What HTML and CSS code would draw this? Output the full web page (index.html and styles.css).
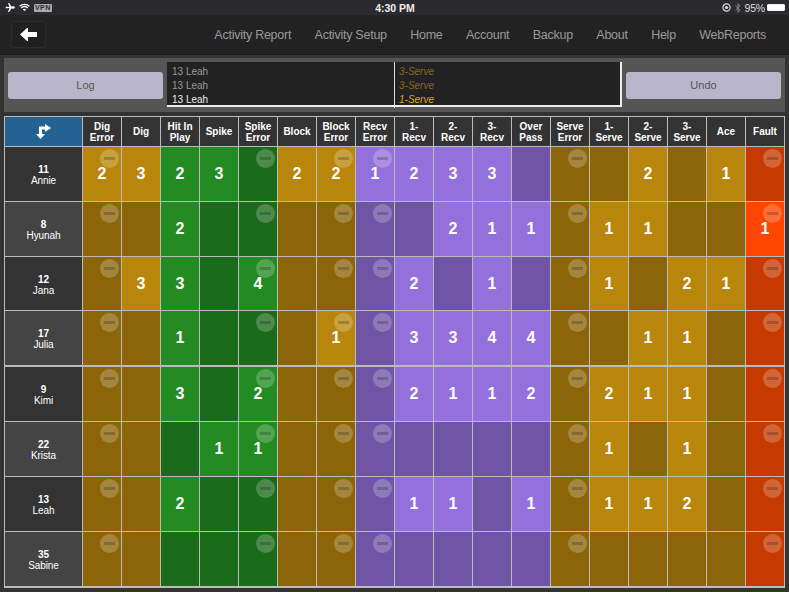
FILE: index.html
```html
<!DOCTYPE html>
<html lang="en">
<head>
<meta charset="utf-8">
<title>Activity</title>
<link rel="stylesheet" href="styles.css">
</head>
<body>
<div class="status">
  <div class="status-left">
    <svg class="ic-plane" width="10" height="11" viewBox="0 0 11 11"><path fill="#fff" d="M0.5 5.5l1.2-1 1.6.4 1.6-.1L3.3.6h1.2l2.6 3.7 2.3-.1c1 0 1.4.7 1.4 1.3s-.4 1.3-1.4 1.3l-2.3-.1-2.6 3.7H3.3l1.6-4.2-1.6-.1-1.6.4z"/></svg>
    <svg class="ic-wifi" width="11" height="9" viewBox="0 0 11 9"><path fill="none" stroke="#fff" stroke-width="1.3" d="M.6 3.2c2.8-2.5 7-2.5 9.8 0M2.2 4.9c1.9-1.6 4.7-1.6 6.6 0"/><path fill="#fff" d="M3.8 6.3c1-.8 2.4-.8 3.4 0L5.5 8.3z"/></svg>
    <span class="vpn">VPN</span>
  </div>
  <div class="time">4:30 PM</div>
  <div class="status-right">
    <svg width="9" height="9" viewBox="0 0 9 9"><circle cx="4.5" cy="4.5" r="3.6" fill="none" stroke="#ddd" stroke-width="1.2"/><circle cx="4.5" cy="4.5" r="1.6" fill="#ddd"/></svg>
    <svg class="ic-bt" width="6" height="10" viewBox="0 0 6 10"><path fill="none" stroke="#888" stroke-width="1" d="M.5 2.7l4.6 4.4L3 9.3V.7l2.1 2.2L.5 7.3"/></svg>
    <span class="pct">95%</span>
    <span class="battery"><span class="battery-fill"></span></span>
  </div>
</div>
<nav class="nav">
  <button class="back" type="button" aria-label="Back">
    <svg width="17" height="13" viewBox="0 0 17 13"><path fill="#fff" d="M0 6.5L7 0h1v4h9v5H8v4H7z"/></svg>
  </button>
  <div class="links">
    <a>Activity Report</a><a>Activity Setup</a><a>Home</a><a>Account</a><a>Backup</a><a>About</a><a>Help</a><a>WebReports</a>
  </div>
</nav>
<section class="panel">
  <button class="pbtn" type="button">Log</button>
  <div class="log">
    <div class="log-col names"><div>13 Leah</div><div>13 Leah</div><div class="cur">13 Leah</div></div>
    <div class="log-col acts"><div>3-Serve</div><div>3-Serve</div><div class="cur">1-Serve</div></div>
  </div>
  <button class="pbtn" type="button">Undo</button>
</section>
<div class="board">
  <div class="swap"><svg width="15" height="15" viewBox="0 0 15 15"><path fill="#fff" d="M9 0l6 4-6 4V5.5H6V10h3l-4.5 5L0 10h3V2.5h6z"/></svg></div>
  <div class="h">Dig Error</div><div class="h">Dig</div><div class="h">Hit In Play</div><div class="h">Spike</div><div class="h">Spike Error</div><div class="h">Block</div><div class="h">Block Error</div><div class="h">Recv Error</div><div class="h">1-<br>Recv</div><div class="h">2-<br>Recv</div><div class="h">3-<br>Recv</div><div class="h">Over Pass</div><div class="h">Serve Error</div><div class="h">1-<br>Serve</div><div class="h">2-<br>Serve</div><div class="h">3-<br>Serve</div><div class="h">Ace</div><div class="h">Fault</div>

  <div class="p"><b>11</b>Annie</div>
  <div class="c a on m">2</div><div class="c a on">3</div><div class="c g on">2</div><div class="c g on">3</div><div class="c g m"></div><div class="c a on">2</div><div class="c a on m">2</div><div class="c v on m">1</div><div class="c v on">2</div><div class="c v on">3</div><div class="c v on">3</div><div class="c v"></div><div class="c a m"></div><div class="c a"></div><div class="c a on">2</div><div class="c a"></div><div class="c a on">1</div><div class="c f m"></div>

  <div class="p alt"><b>8</b>Hyunah</div>
  <div class="c a m"></div><div class="c a"></div><div class="c g on">2</div><div class="c g"></div><div class="c g m"></div><div class="c a"></div><div class="c a m"></div><div class="c v m"></div><div class="c v"></div><div class="c v on">2</div><div class="c v on">1</div><div class="c v on">1</div><div class="c a m"></div><div class="c a on">1</div><div class="c a on">1</div><div class="c a"></div><div class="c a"></div><div class="c f on m">1</div>

  <div class="p"><b>12</b>Jana</div>
  <div class="c a m"></div><div class="c a on">3</div><div class="c g on">3</div><div class="c g"></div><div class="c g on m">4</div><div class="c a"></div><div class="c a m"></div><div class="c v m"></div><div class="c v on">2</div><div class="c v"></div><div class="c v on">1</div><div class="c v"></div><div class="c a m"></div><div class="c a on">1</div><div class="c a"></div><div class="c a on">2</div><div class="c a on">1</div><div class="c f m"></div>

  <div class="p alt"><b>17</b>Julia</div>
  <div class="c a m"></div><div class="c a"></div><div class="c g on">1</div><div class="c g"></div><div class="c g m"></div><div class="c a"></div><div class="c a on m">1</div><div class="c v m"></div><div class="c v on">3</div><div class="c v on">3</div><div class="c v on">4</div><div class="c v on">4</div><div class="c a m"></div><div class="c a"></div><div class="c a on">1</div><div class="c a on">1</div><div class="c a"></div><div class="c f m"></div>

  <div class="p top"><b>9</b>Kimi</div>
  <div class="c a m top"></div><div class="c a top"></div><div class="c g on top">3</div><div class="c g top"></div><div class="c g on m top">2</div><div class="c a top"></div><div class="c a m top"></div><div class="c v m top"></div><div class="c v on top">2</div><div class="c v on top">1</div><div class="c v on top">1</div><div class="c v on top">2</div><div class="c a m top"></div><div class="c a on top">2</div><div class="c a on top">1</div><div class="c a on top">1</div><div class="c a top"></div><div class="c f m top"></div>

  <div class="p alt"><b>22</b>Krista</div>
  <div class="c a m"></div><div class="c a"></div><div class="c g"></div><div class="c g on">1</div><div class="c g on m">1</div><div class="c a"></div><div class="c a m"></div><div class="c v m"></div><div class="c v"></div><div class="c v"></div><div class="c v"></div><div class="c v"></div><div class="c a m"></div><div class="c a on">1</div><div class="c a"></div><div class="c a on">1</div><div class="c a"></div><div class="c f m"></div>

  <div class="p"><b>13</b>Leah</div>
  <div class="c a m"></div><div class="c a"></div><div class="c g on">2</div><div class="c g"></div><div class="c g m"></div><div class="c a"></div><div class="c a m"></div><div class="c v m"></div><div class="c v on">1</div><div class="c v on">1</div><div class="c v"></div><div class="c v on">1</div><div class="c a m"></div><div class="c a on">1</div><div class="c a on">1</div><div class="c a on">2</div><div class="c a"></div><div class="c f m"></div>

  <div class="p alt"><b>35</b>Sabine</div>
  <div class="c a m"></div><div class="c a"></div><div class="c g"></div><div class="c g"></div><div class="c g m"></div><div class="c a"></div><div class="c a m"></div><div class="c v m"></div><div class="c v"></div><div class="c v"></div><div class="c v"></div><div class="c v"></div><div class="c a m"></div><div class="c a"></div><div class="c a"></div><div class="c a"></div><div class="c a"></div><div class="c f m"></div>
</div>
</body>
</html>
```
FILE: styles.css
```css
* { box-sizing: border-box; }
html, body { margin: 0; padding: 0; }
body {
  width: 789px;
  height: 592px;
  overflow: hidden;
  background: #333;
  font-family: "Liberation Sans", Arial, sans-serif;
  color: #fff;
}
.status {
  height: 15px;
  background: #2b2b2f;
  display: grid;
  grid-template-columns: 1fr auto 1fr;
  align-items: center;
  padding: 0 4px 0 5px;
}
.status-left { display: flex; align-items: center; gap: 4px; }
.vpn {
  font-size: 7px;
  line-height: 8px;
  height: 8px;
  padding: 0 1px;
  background: #aaa;
  color: #2b2b2f;
  font-weight: bold;
  letter-spacing: .4px;
  border-radius: 1px;
}
.time { font-size: 10.5px; font-weight: bold; color: #eee; }
.status-right { display: flex; align-items: center; justify-content: flex-end; gap: 4px; }
.pct { font-size: 10.5px; color: #ddd; letter-spacing: -.2px; }
.battery {
  display: block;
  width: 18px;
  height: 7px;
  border: 1px solid #eee;
  border-radius: 1px;
  margin-left: -2px;
}
.battery-fill { display: block; height: 100%; background: #fff; }
.nav {
  height: 40px;
  background: #222;
  border-bottom: 1px solid #1b1b1b;
  display: flex;
  align-items: center;
  padding: 0 23px 0 11px;
}
.back {
  width: 35px;
  height: 27px;
  padding: 0;
  background: #202020;
  border: 1px solid #2c2c2c;
  border-radius: 3px;
  display: flex;
  align-items: center;
  justify-content: center;
}
.links {
  margin-left: auto;
  display: flex;
  gap: 23.4px;
  font-size: 12.5px;
  color: #9a9a9a;
  letter-spacing: -.25px;
}
.panel {
  margin: 3px 4px 0;
  height: 54px;
  background: #555;
  display: grid;
  grid-template-columns: 155px 455px 155px;
  justify-content: space-between;
  align-items: center;
  padding: 0 4px;
}
.pbtn {
  height: 27px;
  border: 0;
  border-radius: 3px;
  background: #b9b6cb;
  color: #555;
  font: 11px "Liberation Sans", Arial, sans-serif;
}
.log {
  height: 45px;
  align-self: start;
  margin-top: 4px;
  background: #222;
  border-right: 2px solid #eee;
  border-bottom: 2px solid #eee;
  display: grid;
  grid-template-columns: 227px 1fr;
  font-size: 10px;
  line-height: 14.2px;
}
.log-col { padding: 3px 0 0 5px; }
.names { color: #999; }
.names .cur { color: #eee; }
.acts { border-left: 1px solid #ddd; font-style: italic; color: #8b6914; padding-left: 4px; }
.acts .cur { color: #daa520; }
.board {
  margin: 4px 4px 0;
  width: 781px;
  background: #bbb;
  padding: 1px 1px 2px;
  display: grid;
  grid-template-columns: 77px repeat(18, 38px);
  grid-template-rows: 29px 54px 54px 53px 54px 55px 54px 54px 54px;
  gap: 1px;
}
.swap { background: #246294; display: flex; align-items: center; justify-content: center; }
.h {
  background: #333;
  font-size: 10px;
  line-height: 11px;
  font-weight: bold;
  text-align: center;
  display: flex;
  align-items: center;
  justify-content: center;
}
.p {
  background: #333;
  font-size: 10px;
  line-height: 11px;
  letter-spacing: -.1px;
  padding-top: 2px;
  display: flex;
  flex-direction: column;
  align-items: center;
  justify-content: center;
}
.p.alt { background: #444; }
.p b { display: block; }
.c {
  position: relative;
  display: flex;
  align-items: center;
  justify-content: center;
  font-size: 16px;
  font-weight: bold;
}
.top { margin-top: 1px; }
.a { background: #8b6508; }
.a.on { background: #b8860b; }
.g { background: #1a6b1a; }
.g.on { background: #228b22; }
.v { background: #7055a6; }
.v.on { background: #9370db; }
.f { background: #c63a00; }
.f.on { background: #ff4500; }
.m::before {
  content: "";
  position: absolute;
  top: 2px;
  left: 17px;
  width: 19px;
  height: 19px;
  border-radius: 50%;
  background: rgba(255, 255, 255, .22);
}
.m::after {
  content: "";
  position: absolute;
  top: 10px;
  left: 21px;
  width: 11px;
  height: 3px;
  background: rgba(0, 0, 0, .2);
}
```
